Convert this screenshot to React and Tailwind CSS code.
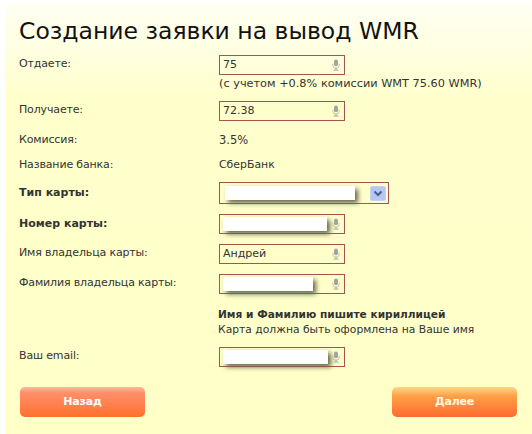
import { useState } from "react";

const font = { fontFamily: '"DejaVu Sans", sans-serif' };

function Mic() {
  return (
    <svg width="8" height="12" viewBox="0 0 10 14" className="shrink-0">
      <rect x="2.500" y="0" width="5" height="8.500" rx="2.500" fill="#a3a3a3" />
      <path d="M1 5.500v1.500a4 4 0 0 0 8 0V5.500" fill="none" stroke="#b5b5b0" strokeWidth="1" />
      <rect x="4.200" y="10.500" width="1.600" height="2" fill="#aaaaaa" />
      <rect x="2" y="12.500" width="6" height="1.500" fill="#b0b0b0" />
    </svg>
  );
}

function Mask({ w }) {
  return <div className={`bg-white h-[14px] ${w} shadow-[3px_3px_5px_#66664a]`} />;
}

function Field({ children }) {
  return (
    <div className="flex items-center justify-between w-[126px] h-[20px] border border-[#a85252] pl-[3px] pr-[4px] text-[11px] text-[#333333]">
      <div className="min-w-0">{children}</div>
      <Mic />
    </div>
  );
}

function Row({ label, bold, className, children }) {
  return (
    <div className={`flex ${className}`}>
      <div className={`w-[200px] leading-[14px] text-[#333333] ${bold ? "text-[11px] font-bold" : "pt-[2px] text-[11px] tracking-[-0.15px]"}`}>{label}</div>
      <div>{children}</div>
    </div>
  );
}

export default function App() {
  const [give] = useState("75");

  return (
    <div className="w-[532px] h-[434px] bg-white overflow-hidden" style={font}>
      <div className="ml-[5px] mt-[2px] h-[432px] rounded-tl-[6px] bg-gradient-to-b from-[#fffff4] via-[#ffffcc] via-[22%] to-[#ffffc8] pl-[14px] pr-[15px]">
        <h1 className="pt-[14px] h-[53px] text-[23.500px] leading-[30px] text-[#111111] whitespace-nowrap">
          Создание заявки на вывод WMR
        </h1>

        <Row label="Отдаете:">
          <Field>{give}</Field>
          <div className="mt-[2px] text-[11.300px] leading-[14px] text-[#333333] whitespace-nowrap">
            (с учетом +0.8% комиссии WMT 75.60 WMR)
          </div>
        </Row>

        <Row label="Получаете:" className="mt-[10px]">
          <Field>72.38</Field>
        </Row>

        <Row label="Комиссия:" className="mt-[10px]">
          <div className="pt-[2px] text-[11.500px] leading-[14px] text-[#333333]">3.5%</div>
        </Row>

        <Row label="Название банка:" className="mt-[9px]">
          <div className="pt-[2px] text-[10.900px] leading-[14px] text-[#333333]">СберБанк</div>
        </Row>

        <Row label="Тип карты:" bold className="mt-[10px] items-center">
          <div className="flex items-center justify-between w-[170px] h-[22px] border border-[#a85252] pl-[5px] pr-[2px]">
            <Mask w="w-[130px]" />
            <div className="flex items-center justify-center w-[16px] h-[15px] rounded-[2px] bg-[#b4c8f5] border border-[#c4d2f4]">
              <svg width="10" height="7" viewBox="0 0 10 7">
                <path d="M1.500 1.500 5 5l3.500-3.500" fill="none" stroke="#4a5f8e" strokeWidth="2" />
              </svg>
            </div>
          </div>
        </Row>

        <Row label="Номер карты:" bold className="mt-[10px] items-center">
          <Field>
            <Mask w="w-[104px]" />
          </Field>
        </Row>

        <Row label="Имя владельца карты:" className="mt-[10px]">
          <Field>Андрей</Field>
        </Row>

        <Row label="Фамилия владельца карты:" className="mt-[10px]">
          <Field>
            <Mask w="w-[90px]" />
          </Field>
        </Row>

        <div className="ml-[199px] mt-[12px] leading-[16px] text-[#333333] whitespace-nowrap">
          <div className="text-[10.600px] font-bold">Имя и Фамилию пишите кириллицей</div>
          <div className="text-[10.750px]">Карта должна быть оформлена на Ваше имя</div>
        </div>

        <Row label="Ваш email:" className="mt-[9px]">
          <Field>
            <Mask w="w-[105px]" />
          </Field>
        </Row>

        <div className="flex justify-between mt-[20px] pl-px">
          <button className="w-[125px] h-[30px] rounded-[5px] bg-gradient-to-b from-[#ffb79c] via-[#ff8f68] via-[20%] to-[#ff7028] text-white text-[11px] tracking-[-0.2px] font-bold">
            Назад
          </button>
          <button className="w-[125px] h-[30px] rounded-[5px] bg-gradient-to-b from-[#ffd884] via-[#ffa048] via-[30%] to-[#ff6a30] text-[#fff8e0] text-[11px] tracking-[-0.2px] font-bold">
            Далее
          </button>
        </div>
      </div>
    </div>
  );
}
